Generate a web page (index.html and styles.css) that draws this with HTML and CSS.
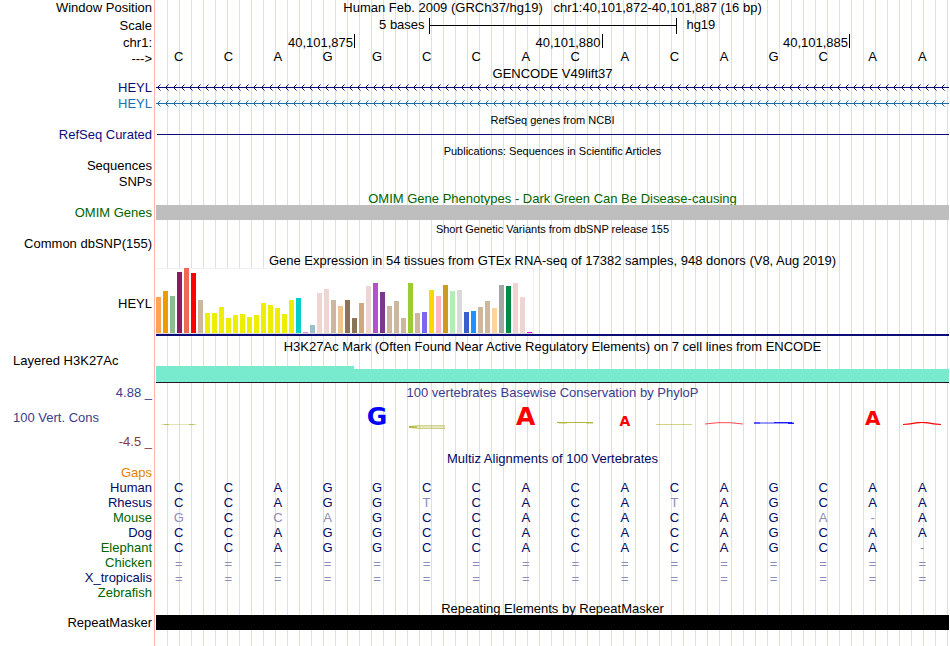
FILE: index.html
```html
<!DOCTYPE html>
<html lang="en">
<head>
<meta charset="utf-8">
<title>hg19 chr1:40,101,872-40,101,887</title>
<link rel="stylesheet" href="styles.css">
</head>
<body>
<main class="browser">
  <div class="row">
    <div class="label">Window Position</div>
    <div class="title">Human Feb. 2009 (GRCh37/hg19) &nbsp; chr1:40,101,872-40,101,887 (16 bp)</div>
  </div>
  <div class="row row-scale">
    <div class="label">Scale</div>
    <div class="scale"><span class="scale-size">5 bases</span><span class="scale-bar"></span><span class="scale-db">hg19</span></div>
  </div>
  <div class="row row-chrom">
    <div class="label">chr1:</div>
    <div class="bases ruler"><span class="tick tick-first">40,101,875</span><span class="tick">40,101,880</span><span class="tick">40,101,885</span></div>
  </div>
  <div class="row row-seq">
    <div class="label">---&gt;</div>
    <div class="bases seq"><span>C</span><span>C</span><span>A</span><span>G</span><span>G</span><span>C</span><span>C</span><span>A</span><span>C</span><span>A</span><span>C</span><span>A</span><span>G</span><span>C</span><span>A</span><span>A</span></div>
  </div>

  <h2 class="title">GENCODE V49lift37</h2>
  <div class="row navy">
    <div class="label">HEYL</div>
    <svg class="gene" aria-hidden="true">
      <defs><pattern id="arrow" width="8" height="16" patternUnits="userSpaceOnUse"><path d="M4.5 4.5 L1.5 7.5 L4.5 10.5" fill="none" stroke="#0c0c78"/></pattern></defs>
      <rect width="100%" height="16" fill="url(#arrow)"/><rect y="7" width="100%" height="1" fill="currentColor"/>
    </svg>
  </div>
  <div class="row blue">
    <div class="label">HEYL</div>
    <svg class="gene" aria-hidden="true">
      <defs><pattern id="arrow-blue" width="8" height="16" patternUnits="userSpaceOnUse"><path d="M4.5 4.5 L1.5 7.5 L4.5 10.5" fill="none" stroke="#1970b0"/></pattern></defs>
      <rect width="100%" height="16" fill="url(#arrow-blue)"/><rect y="7" width="100%" height="1" fill="currentColor"/>
    </svg>
  </div>

  <h2 class="title small">RefSeq genes from NCBI</h2>
  <div class="row navy">
    <div class="label">RefSeq Curated</div>
    <svg class="gene" aria-hidden="true"><rect x="1" y="7" width="100%" height="1" fill="currentColor"/></svg>
  </div>

  <h2 class="title small">Publications: Sequences in Scientific Articles</h2>
  <div class="row"><div class="label">Sequences</div></div>
  <div class="row"><div class="label">SNPs</div></div>

  <h2 class="title green">OMIM Gene Phenotypes - Dark Green Can Be Disease-causing</h2>
  <div class="row green">
    <div class="label">OMIM Genes</div>
    <div class="block block-grey"></div>
  </div>

  <h2 class="title small">Short Genetic Variants from dbSNP release 155</h2>
  <div class="row"><div class="label">Common dbSNP(155)</div></div>

  <h2 class="title title-gtex">Gene Expression in 54 tissues from GTEx RNA-seq of 17382 samples, 948 donors (V8, Aug 2019)</h2>
  <div class="row row-gtex">
    <div class="label">HEYL</div>
    <div class="gtex">
      <div class="bars">
        <i class="fat" style="height:36px"></i><i class="visc" style="height:42px"></i><i class="adrenal" style="height:37px"></i><i class="aorta" style="height:61px"></i><i class="coronary" style="height:65px"></i><i class="tibial" style="height:60px"></i><i class="tan" style="height:33px"></i><i class="brain" style="height:20px"></i><i class="brain" style="height:20px"></i><i class="brain" style="height:26px"></i><i class="brain" style="height:15px"></i><i class="brain" style="height:18px"></i><i class="brain" style="height:19px"></i><i class="brain" style="height:16px"></i><i class="brain" style="height:18px"></i><i class="brain" style="height:30px"></i><i class="brain" style="height:28px"></i><i class="brain" style="height:25px"></i><i class="brain" style="height:19px"></i><i class="brain" style="height:33px"></i><i class="breast" style="height:35px"></i><i class="lympho" style="height:1px"></i><i class="fibro" style="height:8px"></i><i class="pink" style="height:40px"></i><i class="pink" style="height:44px"></i><i class="tan" style="height:33px"></i><i class="sigmoid" style="height:27px"></i><i class="gastro" style="height:33px"></i><i class="gastro" style="height:15px"></i><i class="muscularis" style="height:30px"></i><i class="pink" style="height:47px"></i><i class="atrial" style="height:50px"></i><i class="ventricle" style="height:41px"></i><i class="tan" style="height:27px"></i><i class="tan" style="height:32px"></i><i class="tan" style="height:15px"></i><i class="lung" style="height:50px"></i><i class="tan" style="height:20px"></i><i class="muscle" style="height:21px"></i><i class="nerve" style="height:43px"></i><i class="ovary" style="height:37px"></i><i class="pancreas" style="height:48px"></i><i class="pituitary" style="height:42px"></i><i class="prostate" style="height:43px"></i><i class="skin" style="height:21px"></i><i class="skin-leg" style="height:22px"></i><i class="tan" style="height:26px"></i><i class="tan" style="height:32px"></i><i class="stomach" style="height:25px"></i><i class="testis" style="height:48px"></i><i class="thyroid" style="height:47px"></i><i class="pink" style="height:50px"></i><i class="pink" style="height:36px"></i><i class="blood" style="height:1px"></i>
      </div>
    </div>
  </div>

  <h2 class="title title-h3k">H3K27Ac Mark (Often Found Near Active Regulatory Elements) on 7 cell lines from ENCODE</h2>
  <div class="row row-h3k">
    <div class="label label-left">Layered H3K27Ac</div>
    <div class="bases h3k"><span class="signal signal-high"></span><span class="signal signal-low"></span></div>
  </div>

  <div class="row row-cons">
    <div class="cons-labels indigo"><span class="end">4.88 _</span><span class="start">100 Vert. Cons</span><span class="end maroon">-4.5 _</span></div>
    <div>
      <h2 class="title-cons indigo">100 vertebrates Basewise Conservation by PhyloP</h2>
      <div class="bases logo">
        <span><svg width="38" height="4" viewBox="0 0 38 4"><path d="M1 2.5 H37" stroke="#a8a81e" opacity=".3"/><path d="M4 2.5 H9 M29 2.5 H34" stroke="#a8a81e" opacity=".6"/></svg></span>
        <span></span><span></span><span></span>
        <span class="base-g size-l">G</span>
        <span><svg class="below" width="38" height="4" viewBox="0 0 38 4"><path d="M37 .9 H10 Q2 1.2 1 2 Q4 3.2 14 3.2 H37" fill="none" stroke="#a8a81e" stroke-width=".8"/><path d="M1 2 H9" stroke="#a8a81e"/></svg></span>
        <span></span>
        <span class="base-a size-l">A</span>
        <span><svg width="38" height="4" viewBox="0 0 38 4"><path d="M1 .5 H37" stroke="#a8a81e" opacity=".85"/><path d="M3 1.5 H11 M30 1.5 H37" stroke="#a8a81e" opacity=".35"/></svg></span>
        <span class="base-a size-s">A</span>
        <span><svg width="38" height="4" viewBox="0 0 38 4"><path d="M1 2.5 H37" stroke="#a8a81e" opacity=".5"/></svg></span>
        <span><svg width="38" height="4" viewBox="0 0 38 4"><path d="M0 2 L13 .7 H25 L38 2" fill="none" stroke="red" opacity=".7"/></svg></span>
        <span><svg width="40" height="4" viewBox="0 0 40 4"><path d="M0 1 H40" stroke="#00f" stroke-width="2" opacity=".4"/><path d="M0 1 H6 M20 .5 H38 M34 1.5 H40" fill="none" stroke="#00f" opacity=".8"/></svg></span>
        <span></span>
        <span class="base-a size-m">A</span>
        <span><svg width="38" height="4" viewBox="0 0 38 4"><path d="M0 2.5 Q8 2 13 .8 Q19 0 25 .8 Q30 2 38 2.5" fill="none" stroke="red" stroke-width="1.2"/></svg></span>
      </div>
    </div>
  </div>

  <h2 class="title title-multiz deep">Multiz Alignments of 100 Vertebrates</h2>
  <table class="align">
    <tbody>
      <tr><th class="gaps" scope="row">Gaps</th><td colspan="16"></td></tr>
      <tr><th scope="row">Human</th><td>C</td><td>C</td><td>A</td><td>G</td><td>G</td><td>C</td><td>C</td><td>A</td><td>C</td><td>A</td><td>C</td><td>A</td><td>G</td><td>C</td><td>A</td><td>A</td></tr>
      <tr><th scope="row">Rhesus</th><td>C</td><td>C</td><td>A</td><td>G</td><td>G</td><td class="diff">T</td><td>C</td><td>A</td><td>C</td><td>A</td><td class="diff">T</td><td>A</td><td>G</td><td>C</td><td>A</td><td>A</td></tr>
      <tr><th class="green" scope="row">Mouse</th><td class="diff">G</td><td>C</td><td class="diff">C</td><td class="diff">A</td><td>G</td><td>C</td><td>C</td><td>A</td><td>C</td><td>A</td><td>C</td><td>A</td><td>G</td><td class="diff">A</td><td class="diff">-</td><td>A</td></tr>
      <tr><th scope="row">Dog</th><td>C</td><td>C</td><td>A</td><td>G</td><td>G</td><td>C</td><td>C</td><td>A</td><td>C</td><td>A</td><td>C</td><td>A</td><td>G</td><td>C</td><td>A</td><td>A</td></tr>
      <tr><th class="green" scope="row">Elephant</th><td>C</td><td>C</td><td>A</td><td>G</td><td>G</td><td>C</td><td>C</td><td>A</td><td>C</td><td>A</td><td>C</td><td>A</td><td>G</td><td>C</td><td>A</td><td class="diff">-</td></tr>
      <tr class="unaligned"><th class="green" scope="row">Chicken</th><td>=</td><td>=</td><td>=</td><td>=</td><td>=</td><td>=</td><td>=</td><td>=</td><td>=</td><td>=</td><td>=</td><td>=</td><td>=</td><td>=</td><td>=</td><td>=</td></tr>
      <tr class="unaligned"><th scope="row">X_tropicalis</th><td>=</td><td>=</td><td>=</td><td>=</td><td>=</td><td>=</td><td>=</td><td>=</td><td>=</td><td>=</td><td>=</td><td>=</td><td>=</td><td>=</td><td>=</td><td>=</td></tr>
      <tr><th class="green" scope="row">Zebrafish</th><td colspan="16"></td></tr>
    </tbody>
  </table>

  <h2 class="title">Repeating Elements by RepeatMasker</h2>
  <div class="row">
    <div class="label">RepeatMasker</div>
    <div class="block block-black"></div>
  </div>
</main>
</body>
</html>
```
FILE: styles.css
```css
* { box-sizing: border-box; }

body {
  margin: 0;
  background: #fff;
  color: #000;
  font: 13px/16px "Liberation Sans", Arial, sans-serif;
}

/* Guide lines run the full height behind every track. */
.browser {
  min-height: 100vh;
  padding-right: 1px;
  background:
    linear-gradient(#ffb4b4, #ffb4b4) 154px 0 / 1px 100% no-repeat,
    repeating-linear-gradient(to right, #dcdcfa 0 1px, transparent 1px 12px) 167px 0 no-repeat;
}

.row {
  display: grid;
  grid-template-columns: 152px 1fr;
  column-gap: 4px;
  min-height: 16px;
}

.label { text-align: right; white-space: nowrap; }
.label-left { text-align: left; padding-left: 13px; }

h2 { margin: 0; font: inherit; }
.title { text-align: center; white-space: nowrap; line-height: 15px; }
h2.title { height: 15px; padding-left: 156px; line-height: 17px; }
h2.small { font-size: 11px; }
h2.title-gtex { height: 16px; line-height: 18px; }
h2.title-h3k { height: 18px; line-height: 22px; }
h2.title-multiz { height: 14px; line-height: 15px; }

.navy { color: #0c0c78; }
.blue { color: #1970b0; }
.green { color: #006400; }
.indigo { color: #3c3c8c; }
.maroon { color: #823c3c; }
.deep { color: #000a64; }

.bases { display: grid; grid-template-columns: repeat(16, minmax(0, 1fr)); }

/* Ruler */
.row-scale { height: 18px; line-height: 20px; }
.scale {
  display: grid;
  grid-template-columns: 11fr 10fr 11fr;
  line-height: 18px;
}
.scale-size { text-align: right; padding-right: 4px; }
.scale-bar {
  align-self: center;
  height: 16px;
  margin-right: -1px;
  border: solid #000;
  border-width: 0 1px;
  background: linear-gradient(#000, #000) 0 7px / 100% 1px no-repeat;
}
.scale-db { padding-left: 10px; }
.row-chrom { height: 16px; line-height: 18px; }
.ruler { padding-left: 1px; }
.tick {
  grid-column: span 5;
  height: 14px;
  padding-right: 1px;
  border-right: 1px solid #000;
  text-align: right;
}
.tick-first { grid-column: span 4; }
.row-seq { min-height: 15px; line-height: 13px; }
.row-seq .label { line-height: 18px; height: 15px; }
.seq span { text-align: center; padding-right: 4px; }

.gene { display: block; width: 100%; height: 16px; }

.block { height: 15px; }
.block-grey { background: #bebebe; }
.block-black { background: #000; }

/* Tissue expression chart */
.row-gtex { align-items: center; }
.row-gtex .label { padding-top: 4px; }
.gtex { border-bottom: 2px solid #0c0c78; }
.bars {
  display: flex;
  align-items: flex-end;
  gap: 2px;
  width: 378px;
  height: 66px;
  background: #fff;
  border-bottom: 1px solid #dcdcdc;
  box-shadow: inset 0 1px #f0f0f0, inset -1px 0 #f0f0f0;
}
.bars i { width: 5px; }
.fat { background: #ffa54f; }
.visc { background: #ee9a00; }
.adrenal { background: #8fbc8f; }
.aorta { background: #8b1c62; }
.coronary { background: #ee6a50; }
.tibial { background: #f00; }
.tan { background: #cdb79e; }
.brain { background: #eeee00; }
.breast { background: #00cdcd; }
.lympho { background: #ee82ee; }
.fibro { background: #9ac0cd; }
.pink { background: #eed5d2; }
.sigmoid { background: #eec591; }
.gastro { background: #8b7355; }
.muscularis { background: #cdaa7d; }
.atrial { background: #b452cd; }
.ventricle { background: #7a378b; }
.lung { background: #9acd32; }
.muscle { background: #7a67ee; }
.nerve { background: #ffd700; }
.ovary { background: #ffb6c1; }
.pancreas { background: #cd9b1d; }
.pituitary { background: #b4eeb4; }
.prostate { background: #d9d9d9; }
.skin { background: #3a5fcd; }
.skin-leg { background: #1e90ff; }
.stomach { background: #ffd39b; }
.testis { background: #a6a6a6; }
.thyroid { background: #008b45; }
.blood { background: #f0f; }

/* Histone mark signal */
.row-h3k { min-height: 29px; line-height: 13px; }
.h3k { align-items: end; }
.signal { background: #78ebcf; border-bottom: 1px solid #281428; }
.signal-high { grid-column: span 4; height: 17px; }
.signal-low { grid-column: span 12; height: 14px; }

/* Conservation */
.row-cons { min-height: 68px; padding: 2px 0 1px; }
.cons-labels {
  display: flex;
  flex-direction: column;
  justify-content: space-between;
}
.end { text-align: right; }
.start { padding-left: 13px; }
.title-cons { text-align: center; }
.logo {
  height: 25px;
  align-items: end;
  font: bold 25px/18px "DejaVu Sans", sans-serif;
}
.logo span { text-align: center; padding-right: 4px; }
.logo svg { display: block; margin: 0 auto; }
.logo .below { margin-bottom: -3px; }
.base-g { color: #00f; }
.base-a { color: #f00; }
.size-l { font-size: 25px; line-height: 18px; }
.size-m { font-size: 20px; line-height: 15px; }
.size-s { font-size: 14px; line-height: 10px; }

/* Species alignment */
.align {
  width: 100%;
  table-layout: fixed;
  border-collapse: collapse;
  color: #000a64;
  line-height: 15px;
}
.align th {
  width: 156px;
  padding: 0 4px 0 0;
  font-weight: normal;
  text-align: right;
}
.align td { padding: 0 4px 0 0; text-align: center; }
.align tr { height: 15px; }
.align .green { color: #006400; }
.align .gaps { color: #e68200; }
.align .diff, .unaligned td { color: #8c8cb8; }
.align .unaligned td { padding-top: 2px; line-height: 13px; }
```
